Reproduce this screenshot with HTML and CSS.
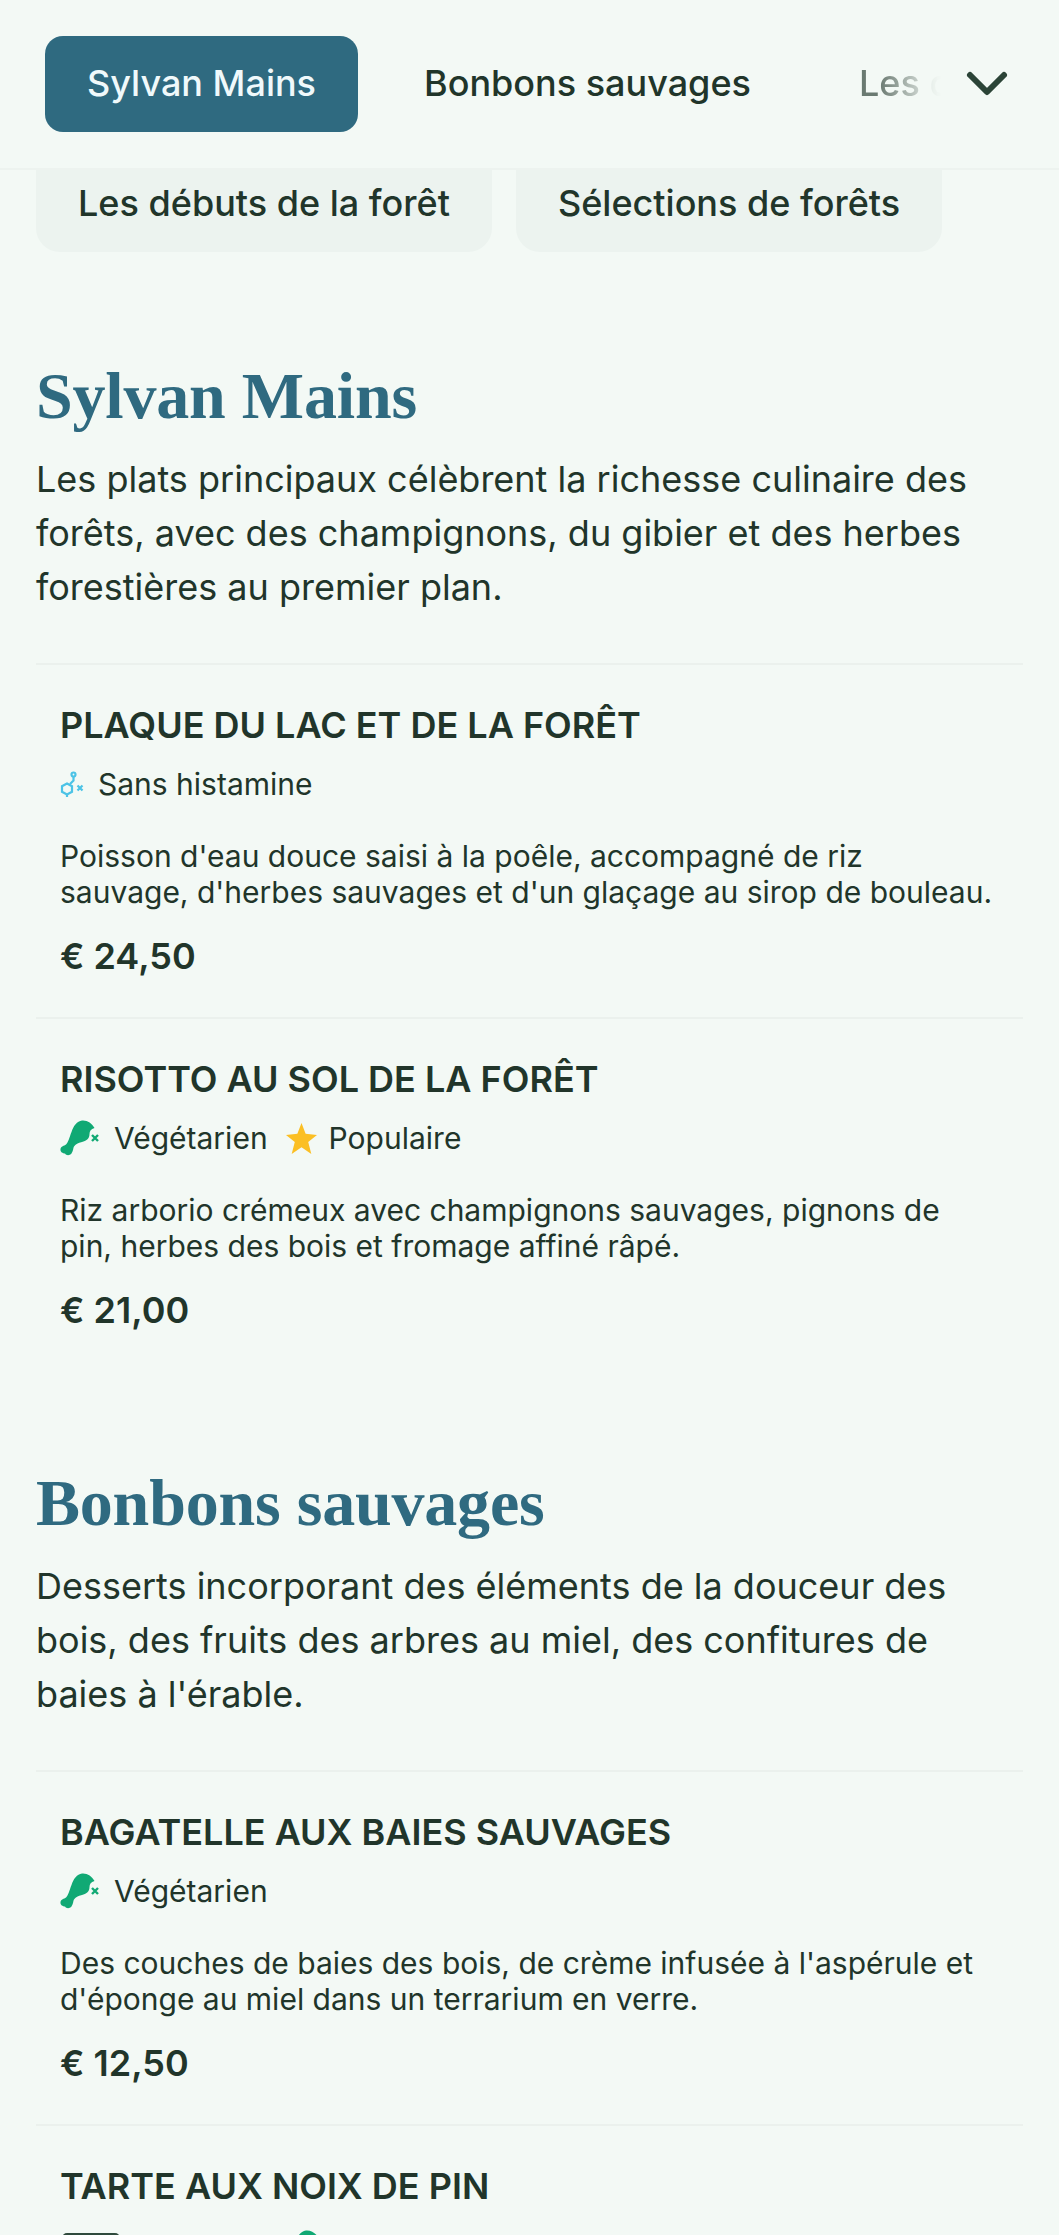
FILE: index.html
```html
<!DOCTYPE html>
<html lang="fr">
<head>
<meta charset="utf-8">
<title>Menu</title>
<link rel="stylesheet" href="styles.css">
</head>
<body>
<svg class="defs" aria-hidden="true"><defs><g id="leg"><path d="M22 .5 C27 0 32 3 34.500 8 C31 9 29.500 11 29.500 14 C29.500 19 26 21 22 22 C18 23 15.500 24 14 26.500 C13 28 13.500 30.500 11.500 33.500 C9.500 36 6 35.500 5 33.500 C3 33.500 0 32 .5 29 C1 26 4 26 6 24.500 C8.500 22 9.500 17 11.500 12 C13.500 6 17 1 22 .5 Z" fill="#10a974"/><path d="M32 15 l6 6 M38 15 l-6 6" stroke="#10a974" stroke-width="2.400"/></g></defs></svg>
<div class="page">
<header class="topbar">
  <nav class="tabs">
    <a class="tab tab-active">Sylvan Mains</a>
    <a class="tab">Bonbons sauvages</a>
    <a class="tab tab-fade">Les débuts</a>
  </nav>
  <svg class="chevron" viewBox="0 0 44 28" aria-hidden="true"><path d="M5 5 L22 22 L39 5" fill="none" stroke="#2b4437" stroke-width="6" stroke-linecap="round" stroke-linejoin="round"/></svg>
</header>
<div class="chips">
  <a class="chip">Les débuts de la forêt</a>
  <a class="chip">Sélections de forêts</a>
</div>
<main>
<section class="section">
  <h2 class="section-title">Sylvan Mains</h2>
  <p class="section-desc">Les plats principaux célèbrent la richesse culinaire des forêts, avec des champignons, du gibier et des herbes forestières au premier plan.</p>
  <article class="item">
    <h3 class="item-name">PLAQUE DU LAC ET DE LA FORÊT</h3>
    <div class="tags">
      <span class="tag"><svg class="ico-hist" viewBox="0 0 26 26" aria-hidden="true"><g fill="none" stroke="#4cc3e6" stroke-width="2.200"><path d="M7 12.500 L12 15.250 V20.750 L7 23.500 L2 20.750 V15.250 Z"/><path d="M10 13 L13.500 9.500 V5.500"/><circle cx="13.500" cy="3.500" r="2"/><path d="M7 23.500 V26"/></g><path d="M17.500 14.500 l5 5 M22.500 14.500 l-5 5" stroke="#4cc3e6" stroke-width="2.200"/></svg>Sans histamine</span>
    </div>
    <p class="item-desc">Poisson d'eau douce saisi à la poêle, accompagné de riz sauvage, d'herbes sauvages et d'un glaçage au sirop de bouleau.</p>
    <div class="price">€ 24,50</div>
  </article>
  <article class="item">
    <h3 class="item-name">RISOTTO AU SOL DE LA FORÊT</h3>
    <div class="tags">
      <span class="tag"><svg class="ico-leg" viewBox="0 0 42 36" aria-hidden="true"><use href="#leg"/></svg>Végétarien</span>
      <span class="tag"><svg class="ico-star" viewBox="0 0 30 30" aria-hidden="true"><path d="M15 0 L19 10.500 L30 11.500 L21.500 18.500 L24.500 30 L15 23.500 L5.500 30 L8.500 18.500 L0 11.500 L11 10.500 Z" fill="#fbbf24"/></svg>Populaire</span>
    </div>
    <p class="item-desc">Riz arborio crémeux avec champignons sauvages, pignons de pin, herbes des bois et fromage affiné râpé.</p>
    <div class="price">€ 21,00</div>
  </article>
</section>
<section class="section">
  <h2 class="section-title">Bonbons sauvages</h2>
  <p class="section-desc">Desserts incorporant des éléments de la douceur des bois, des fruits des arbres au miel, des confitures de baies à l'érable.</p>
  <article class="item">
    <h3 class="item-name">BAGATELLE AUX BAIES SAUVAGES</h3>
    <div class="tags">
      <span class="tag"><svg class="ico-leg" viewBox="0 0 42 36" aria-hidden="true"><use href="#leg"/></svg>Végétarien</span>
    </div>
    <p class="item-desc">Des couches de baies des bois, de crème infusée à l'aspérule et d'éponge au miel dans un terrarium en verre.</p>
    <div class="price">€ 12,50</div>
  </article>
  <article class="item">
    <h3 class="item-name">TARTE AUX NOIX DE PIN</h3>
    <div class="tags tags-last">
      <span class="tag"><svg class="ico-box" viewBox="0 0 58 30" aria-hidden="true"><rect width="58" height="30" rx="5" fill="#2f4a3c"/></svg></span>
      <span class="tag"><svg class="ico-leg" viewBox="0 0 42 36" aria-hidden="true"><use href="#leg"/></svg>Végétarien</span>
    </div>
  </article>
</section>
</main>
</div>
</body>
</html>
```

FILE: styles.css
```css
html, body { margin: 0; padding: 0; }
body {
  background: #f3f9f5;
  color: #21352a;
  font-family: Inter, "Liberation Sans", sans-serif;
}
.defs { position: absolute; width: 0; height: 0; }
.page { height: 2235px; overflow: hidden; }
.topbar {
  height: 170px;
  box-sizing: border-box;
  border-bottom: 2px solid #edf3ef;
  padding: 36px 0 0 45px;
  display: flex;
  position: relative;
}
.tabs { display: flex; gap: 24px; width: 905px; overflow: hidden; white-space: nowrap; }
.tab { display: block; height: 96px; line-height: 94px; padding: 0 42px; font-size: 36px; font-weight: 500; }
.tab-active { background: #2f6a80; color: #f0f9fb; border-radius: 18px; }
.tab-fade {
  -webkit-mask-image: linear-gradient(90deg, rgba(0,0,0,.65) 0, rgba(0,0,0,.65) 62px, rgba(0,0,0,.25) 98px, rgba(0,0,0,.06) 112px, transparent 124px);
  mask-image: linear-gradient(90deg, rgba(0,0,0,.65) 0, rgba(0,0,0,.65) 62px, rgba(0,0,0,.25) 98px, rgba(0,0,0,.06) 112px, transparent 124px);
}
.chevron { width: 44px; height: 28px; position: absolute; left: 965px; top: 70px; }
.chips { display: flex; gap: 24px; padding-left: 36px; }
.chip { display: block; height: 82px; line-height: 66px; padding: 0 42px; font-size: 36px; font-weight: 500; background: #ecf3ef; border-radius: 0 0 24px 24px; box-sizing: border-box; }
.section { padding: 0 36px; margin-top: 108px; }
.section + .section { margin-top: 96px; }
.section-title { margin: 0; font-family: "Liberation Serif", serif; font-weight: 700; font-size: 66px; line-height: 72px; letter-spacing: -0.2px; color: #2f6a80; }
.section-desc { margin: 20px 0 0; font-size: 36px; line-height: 54px; }
.item { border-top: 2px solid #ebf1ed; padding: 36px 24px 39px; }
.section-desc + .item { margin-top: 49px; }
.item-name { margin: 0; font-size: 36px; line-height: 48px; font-weight: 600; }
.tags { display: flex; gap: 18px; margin-top: 13px; height: 44px; align-items: center; }
.tags-last { gap: 164px; margin-top: 16px; padding-left: 2px; }
.tag { display: flex; align-items: center; font-size: 30px; gap: 12px; }
.ico-hist { width: 26px; height: 26px; }
.ico-leg { width: 42px; height: 36px; }
.ico-star { width: 31px; height: 31px; }
.ico-box { width: 58px; height: 30px; }
.item-desc { margin: 32px 0 0; font-size: 30px; line-height: 36px; }
.price { margin-top: 24px; font-size: 36px; line-height: 44px; font-weight: 600; }
```
